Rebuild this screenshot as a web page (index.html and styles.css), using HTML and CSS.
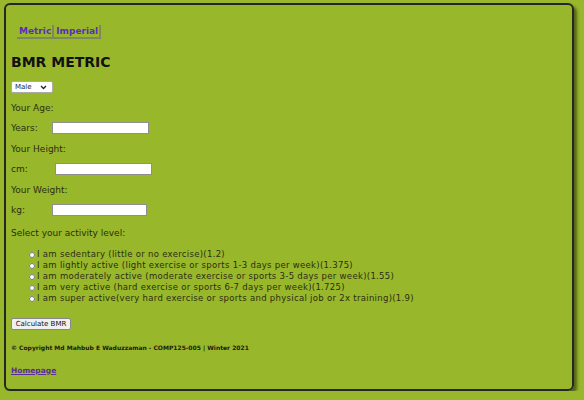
FILE: index.html
```html
<!DOCTYPE html>
<html>
<head>
<meta charset="utf-8">
<title>BMR Metric</title>
<link rel="stylesheet" href="styles.css">
</head>
<body>
<div class="page">
  <nav class="nav">
    <a class="nav-link" href="#">Metric</a><a class="nav-link" href="#">Imperial</a>
  </nav>
  <h1 class="title">BMR METRIC</h1>
  <form class="form">
    <span class="select-wrap">
      <select class="gender"><option>Male</option><option>Female</option></select>
      <svg class="chevron" width="7" height="5" viewBox="0 0 7 5"><path d="M1 1 L3.5 3.5 L6 1" fill="none" stroke="#222" stroke-width="1.3"/></svg>
    </span>
    <p class="label">Your Age:</p>
    <div class="row"><span class="row-label">Years:</span><input class="field" type="text"></div>
    <p class="label">Your Height:</p>
    <div class="row"><span class="row-label row-label-wide">cm:</span><input class="field" type="text"></div>
    <p class="label">Your Weight:</p>
    <div class="row"><span class="row-label">kg:</span><input class="field field-short" type="text"></div>
    <p class="label label-activity">Select your activity level:</p>
    <ul class="activities">
      <li class="activity"><input class="radio" type="radio" name="a">I am sedentary (little or no exercise)(1.2)</li>
      <li class="activity"><input class="radio" type="radio" name="a">I am lightly active (light exercise or sports 1-3 days per week)(1.375)</li>
      <li class="activity"><input class="radio" type="radio" name="a">I am moderately active (moderate exercise or sports 3-5 days per week)(1.55)</li>
      <li class="activity"><input class="radio" type="radio" name="a">I am very active (hard exercise or sports 6-7 days per week)(1.725)</li>
      <li class="activity"><input class="radio" type="radio" name="a">I am super active(very hard exercise or sports and physical job or 2x training)(1.9)</li>
    </ul>
    <button class="calc" type="button">Calculate BMR</button>
  </form>
  <p class="copyright">© Copyright Md Mahbub E Waduzzaman - COMP125-005 | Winter 2021</p>
  <a class="home" href="#">Homepage</a>
</div>
</body>
</html>
```

FILE: styles.css
```css
html, body {
  margin: 0;
  padding: 0;
  background: #99b72a;
}
body {
  font-family: "DejaVu Sans", Verdana, sans-serif;
  color: #2b2e12;
}
.page {
  box-sizing: border-box;
  margin: 3px 10px 0 4px;
  height: 388px;
  border: 2px solid #262626;
  border-radius: 6px;
  box-shadow: 3px 3px 3px rgba(0, 0, 0, 0.45);
  padding: 20px 0 0 5px;
}
.nav {
  display: flex;
  margin-left: 6px;
}
.nav-link {
  font-size: 9px;
  font-weight: bold;
  color: #5a2cc0;
  text-decoration: none;
  padding: 1px 1px 1px 2px;
  border-right: 2px solid #7d8a5e;
  border-bottom: 2px solid #7d8a5e;
  line-height: 10px;
}
.title {
  font-size: 14px;
  font-weight: bold;
  color: #111;
  margin: 15px 0 11px 0;
  line-height: 16px;
}
.form {
  margin: 0;
}
.select-wrap {
  position: relative;
  display: block;
  width: 42px;
  height: 12px;
}
.gender {
  -webkit-appearance: none;
  appearance: none;
  box-sizing: border-box;
  font-family: "DejaVu Sans", sans-serif;
  font-size: 7px;
  width: 42px;
  height: 12px;
  padding: 0 0 0 3px;
  border: 1px solid #aaa;
  border-radius: 2px;
  background: #fff;
  color: #1a1a3a;
  display: block;
}
.chevron {
  position: absolute;
  right: 6px;
  top: 4px;
  pointer-events: none;
}
.label {
  font-size: 9px;
  margin: 10px 0 0 0;
  line-height: 11px;
}
.label-activity {
  margin-top: 11.5px;
}
.row {
  display: flex;
  align-items: center;
  margin-top: 8px;
  font-size: 9px;
  line-height: 12px;
}
.row-label {
  width: 41px;
}
.row-label-wide {
  width: 44px;
}
.field {
  box-sizing: border-box;
  width: 97px;
  height: 12px;
  border: 1px solid #8f8f8f;
  background: #fff;
  padding: 0;
}
.field-short {
  width: 95px;
}
.activities {
  list-style: none;
  margin: 10.5px 0 0 0;
  padding: 0 0 0 17px;
}
.activity {
  font-size: 8.5px;
  letter-spacing: 0.3px;
  line-height: 11px;
  display: flex;
  align-items: center;
}
.radio {
  width: 6px;
  height: 6px;
  margin: 0 2px 0 1px;
}
.calc {
  display: block;
  font-family: "DejaVu Sans", sans-serif;
  font-size: 7px;
  margin-top: 13.5px;
  height: 12px;
  width: 60px;
  padding: 0;
  border: 1px solid #888;
  border-radius: 2px;
  background: #f0f0f0;
  color: #111;
}
.copyright {
  font-size: 6px;
  font-weight: bold;
  color: #1a1a10;
  margin: 14px 0 0 0;
  line-height: 8px;
}
.home {
  display: inline-block;
  margin-top: 14px;
  font-size: 7.5px;
  font-weight: bold;
  color: #5a2c9c;
}
```
